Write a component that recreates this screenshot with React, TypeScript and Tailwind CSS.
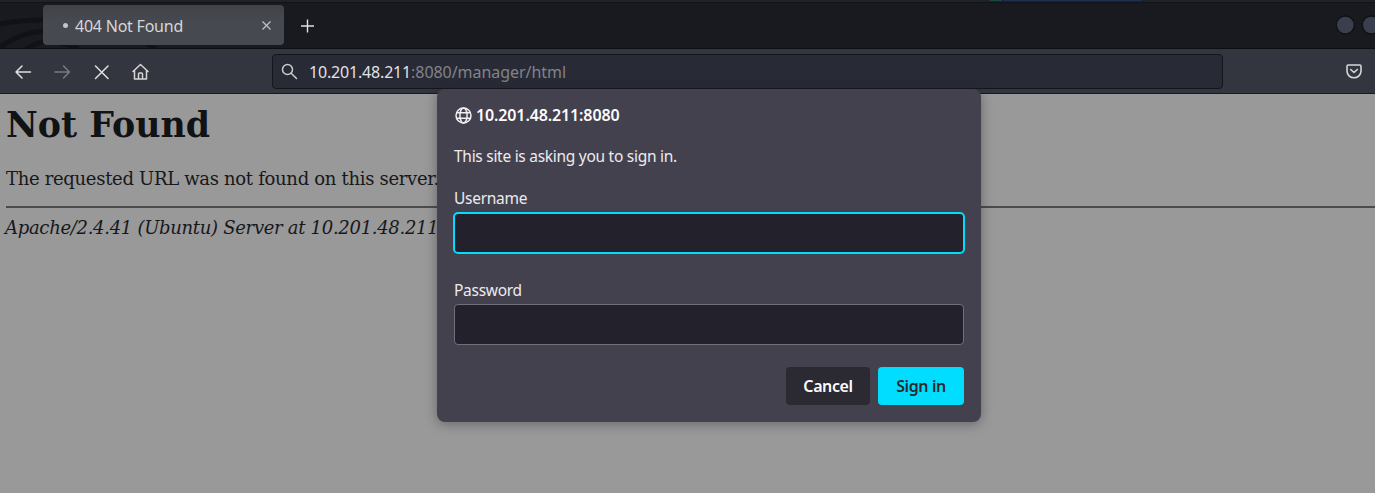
import React from 'react';

function TabStrip() {
  return (
    <div className="relative flex h-[49px] shrink-0 overflow-hidden border-b border-[#0e0f13] bg-[#191a1f]">
      <svg className="absolute left-0 top-0" width="200" height="49" fill="none" stroke="#111216" strokeWidth="5">
        <path d="M0 24Q20 20 43 20M0 47Q20 33 43 31M26 49Q36 43 46 41M60 43Q68 44 78 49M146 44Q150 45 156 49" />
      </svg>
      <svg className="absolute left-0 top-0" width="1375" height="3">
        <rect width="1375" height="2" fill="#20222a" />
        <rect y="2" width="1375" height="1" fill="#121317" />
        <path d="M990 .5h12" stroke="#1d4642" />
        <path d="M1004 .5h138" stroke="#1d2e50" />
      </svg>
      <div className="relative ml-[43px] mt-[5px] flex h-10 w-[241px] items-center rounded-[4px] bg-linear-to-b from-[#404248] to-[#464950] to-40%">
        <span className="ml-5 size-[5px] rounded-full bg-[#c4c5c8]" />
        <span className="ml-[7px] mt-px whitespace-nowrap text-base tracking-[-0.23px] text-[#d6d6d7]">404 Not Found</span>
        <svg className="absolute left-[218px] top-[15px]" width="11" height="11" stroke="#c0c1c3" strokeWidth="1.2">
          <path d="M1.500 1.500l8 8M9.500 1.500l-8 8" />
        </svg>
      </div>
      <svg className="relative ml-4 mt-[19px]" width="14" height="14" stroke="#e0e0e2" strokeWidth="1.4">
        <path d="M7.500 .5v13M1 7h13" />
      </svg>
      <svg className="absolute left-[1334px] top-[14px]" width="41" height="22" fill="#3a3f4d" stroke="#0f1014" strokeWidth="1.3">
        <circle cx="11.300" cy="11" r="9" />
        <circle cx="37.300" cy="11" r="9" />
      </svg>
    </div>
  );
}

function Toolbar() {
  return (
    <div className="relative flex h-[45px] shrink-0 items-start border-b border-[#191a1f] bg-[#33363e]">
      <svg className="mt-[14px] shrink-0" width="160" height="18" fill="none" strokeLinecap="round" strokeLinejoin="round" strokeWidth="1.5">
        <path d="M30.500 9H16M22 3l-6 6 6 6" stroke="#e0e0e2" />
        <path d="M55 9h14.500M63.500 3l6 6-6 6" stroke="#797b80" />
        <path d="M95.500 3l12.500 12.500M108 3L95.500 15.500" stroke="#e0e0e2" />
        <path d="M133 8.500l7.500-7 7.500 7M134.500 7.500v8.500h12V7.500M138.500 16v-5q0-1 1-1h2q1 0 1 1v5" stroke="#d6d6d7" />
      </svg>
      <div className="ml-[112px] mt-[5px] flex h-[35px] w-[951px] items-center rounded-[4px] border border-[#15161b] bg-[#282a36]">
        <svg className="ml-2 shrink-0" width="17" height="17" fill="none" stroke="#cacbcc" strokeLinecap="round" strokeWidth="1.5">
          <circle cx="6.500" cy="6.500" r="5" />
          <path d="M10.200 10.200l5.300 5.300" />
        </svg>
        <span className="ml-[11px] whitespace-nowrap text-base tracking-[-0.05px] text-[#828389]">
          <span className="tracking-[-0.18px] text-[#e2e2e3]">10.201.48.211</span>:8080/manager/html
        </span>
      </div>
      <svg className="ml-[122px] mt-[15px] shrink-0" width="18" height="16" fill="none" stroke="#d6d6d7" strokeLinecap="round" strokeLinejoin="round" strokeWidth="1.6">
        <path d="M3.200 1h11.600q1.200 0 1.200 1.200V7a7 6.800 0 0 1-14 0V2.200Q2 1 3.200 1zM5.700 5.500L9 8.500l3.300-3" />
      </svg>
    </div>
  );
}

function Page() {
  return (
    <div className="grow pl-[6px] font-['DejaVu_Serif',serif] text-[#111214]">
      <h1 className="h-[62px] whitespace-nowrap pt-[10px] text-[34.8px] leading-[42px] font-bold">Not Found</h1>
      <p className="h-[50px] whitespace-nowrap pt-3 text-[18px] leading-[22px] tracking-[-0.31px] text-[#17181a]">The requested URL was not found on this server.</p>
      <hr className="h-[2px] border-0 bg-[#4b4b4e]" />
      <address className="-ml-px whitespace-nowrap pt-[9px] text-[18px] leading-[22px] tracking-[-0.3px] italic text-[#17181a]">Apache/2.4.41 (Ubuntu) Server at 10.201.48.211 Port 80</address>
    </div>
  );
}

function SignInDialog() {
  return (
    <form className="absolute left-[437px] top-[89px] flex h-[333px] w-[544px] flex-col rounded-[8px] bg-[#44414e] px-[17px] text-[15.5px] leading-5 tracking-[-0.28px] text-[#ebebee] shadow-[0_2px_12px_rgba(30,30,35,.4)]">
      <div className="mt-4 flex h-5 items-center whitespace-nowrap text-base font-semibold tracking-[-0.13px] text-[#fbfbfe]">
        <svg className="mr-1 ml-px shrink-0" width="17" height="17" fill="none" stroke="#f0f0f3" strokeWidth="1.5">
          <circle cx="8.500" cy="8.500" r="7.500" />
          <ellipse cx="8.500" cy="8.500" rx="3.600" ry="7.500" />
          <path d="M1.500 5.700h14M1.500 11.300h14" />
        </svg>
        10.201.48.211:8080
      </div>
      <p className="mt-[21px] whitespace-nowrap">This site is asking you to sign in.</p>
      <label className="mt-[22px]" htmlFor="user">Username</label>
      <input id="user" className="-mx-px mt-1 h-[42px] w-[512px] shrink-0 rounded-[5px] border-2 border-[#00ddff] bg-[#23212b] outline-none" />
      <label className="mt-[26px]" htmlFor="pass">Password</label>
      <input id="pass" type="password" className="mt-1 h-[41px] w-[510px] shrink-0 rounded-[4px] border border-[#716f79] bg-[#23212b] outline-none" />
      <div className="mt-[22px] flex justify-end gap-2 text-base font-semibold tracking-[-0.4px]">
        <button type="button" className="h-[38px] w-[84px] rounded-[4px] bg-[#2b2a33] text-[#fbfbfe]">Cancel</button>
        <button type="button" className="h-[38px] w-[86px] rounded-[4px] bg-[#00ddff] text-[#2b2a33]">Sign in</button>
      </div>
    </form>
  );
}

export default function App() {
  return (
    <div className="relative flex h-[493px] w-[1375px] flex-col overflow-hidden bg-[#99999a] font-['Noto_Sans',sans-serif]">
      <TabStrip />
      <Toolbar />
      <Page />
      <SignInDialog />
    </div>
  );
}
